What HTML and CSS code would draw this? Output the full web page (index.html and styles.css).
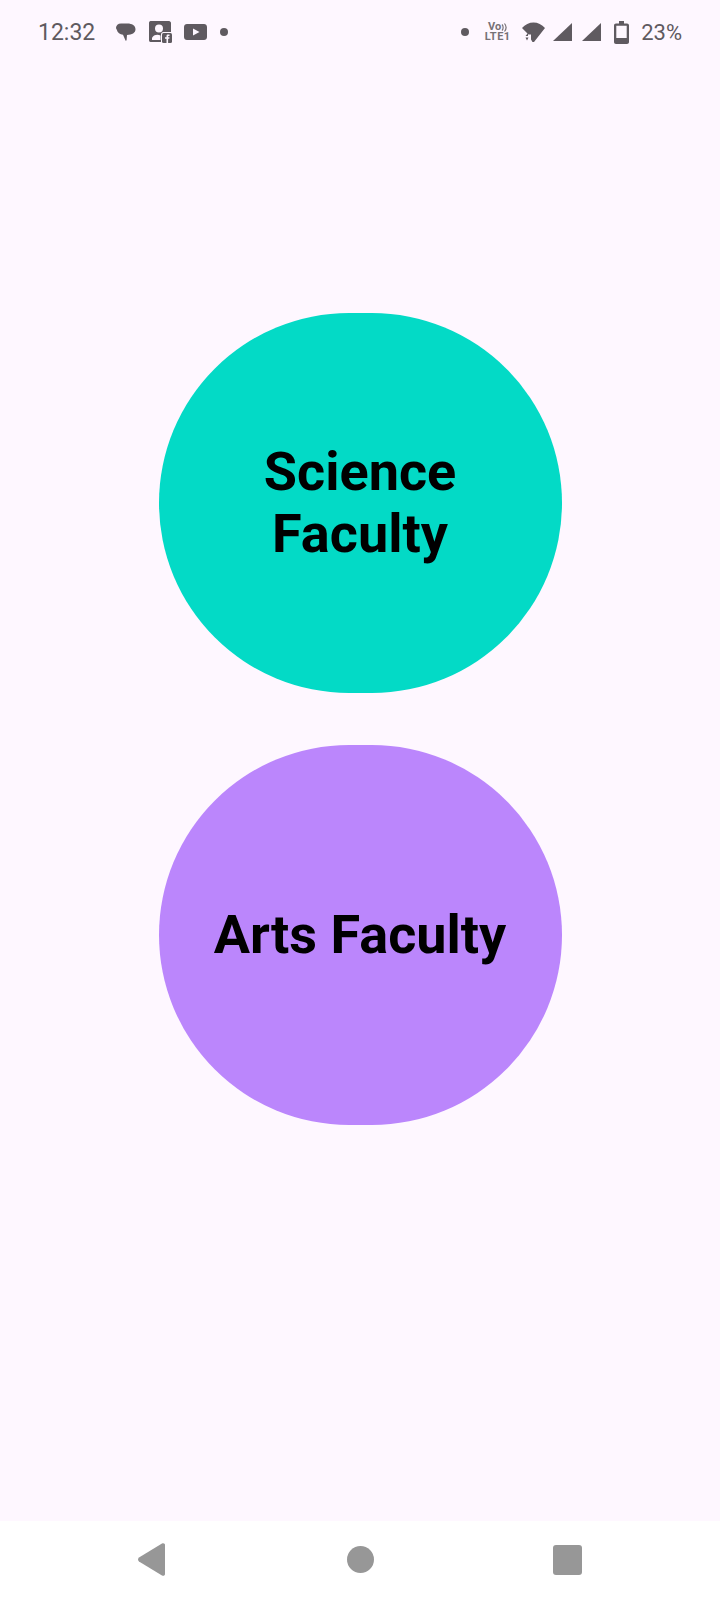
FILE: index.html
```html
<!DOCTYPE html>
<html lang="en">
<head>
  <meta charset="UTF-8" />
  <title>Faculties</title>
  <link rel="stylesheet" href="styles.css">
</head>
<body>
  <div class="phone">
    <div class="status-bar">
      <span class="clock">12:32</span>
      <svg class="ic ic-chat" viewBox="0 0 20 18"><path d="M5 0.5C2 0.5 0 2.5 0 4.8C0 5.6 .3 6.2 .8 6.8C1.4 9.6 4 11.5 7 11.7L9.5 17.5C10 17.9 10.5 17.6 10.6 17L11 11.9C16 11.8 19.5 9.8 19.5 6.2C19.5 2.6 16 .5 11.5 .5Z"/></svg>
      <svg class="ic ic-contact" viewBox="0 0 23 22"><path fill-rule="evenodd" d="M1.5 0H20C21 0 22 1 22 2V11H14.5C13 11 12 12 12 13.5V21H1.500C.5 21 0 20 0 19V2C0 1 .5 0 1.500 0ZM10 3.500A4 4 0 1 0 10 11.500A4 4 0 1 0 10 3.500ZM3 19H11.500V14.500C8.500 12.800 4 14 3 17Z"/><rect x="13" y="12" width="10" height="10" rx="1.500"/><path class="cutout" d="M17.500 22V17.800H16V16.200H17.500V15C17.500 13.900 18.300 13.400 20.500 13.600V15H19.600C19.200 15 19.100 15.200 19.100 15.500V16.200H20.500L20.300 17.800H19.100V22Z"/></svg>
      <svg class="ic ic-video" viewBox="0 0 23 16"><path fill-rule="evenodd" d="M3 0H20C21.700 0 23 1.300 23 3V13C23 14.700 21.700 16 20 16H3C1.300 16 0 14.700 0 13V3C0 1.300 1.300 0 3 0ZM9 4.500V11.500L15.500 8Z"/></svg>
      <span class="dot dot-left"></span>
      <span class="spacer"></span>
      <span class="dot dot-right"></span>
      <div class="volte">
        <span class="volte-top">Vo<svg class="volte-waves" viewBox="0 0 6 9"><path d="M1 1.500C2.500 3 2.500 6 1 7.500M3.500 .5C5.500 3 5.500 6 3.500 8.500" fill="none" stroke-width="1.200"/></svg></span>
        <span class="volte-bottom">LTE1</span>
      </div>
      <svg class="ic ic-wifi" viewBox="0 0 23 20"><path d="M0 6C6 -1.500 17 -1.500 23 6L12 20H10.500L9 17.500V12.500H6.500Z"/><path d="M3.500 14L6 11V14ZM3.500 15.500H6.500L5 18.500Z"/></svg>
      <svg class="ic ic-signal sig-one" viewBox="0 0 19 18"><path d="M19 0V18H0Z"/></svg>
      <svg class="ic ic-signal sig-two" viewBox="0 0 19 18"><path d="M19 0V18H0Z"/></svg>
      <svg class="ic ic-battery" viewBox="0 0 15 23"><path fill-rule="evenodd" d="M5 0H10V2.500H13C14.200 2.500 15 3.300 15 4.500V21C15 22.200 14.200 23 13 23H2C.8 23 0 22.200 0 21V4.500C0 3.300 .8 2.500 2 2.500H5ZM2.300 4.800V17H12.700V4.800Z"/></svg>
      <span class="battery-text">23%</span>
    </div>

    <main class="content">
      <button class="faculty science">Science<br>Faculty</button>
      <button class="faculty arts">Arts Faculty</button>
    </main>

    <nav class="nav-bar">
      <svg class="nav-ic nav-back" viewBox="0 0 27 33"><path d="M24 .5C25.500 -.3 27 .5 27 2V31C27 32.500 25.500 33.300 24 32.500L1 18.500C-.3 17.600 -.3 15.400 1 14.500Z"/></svg>
      <span class="nav-home"></span>
      <span class="nav-recent"></span>
    </nav>
  </div>
</body>
</html>
```

FILE: styles.css
```css
body {
  margin: 0;
  font-family: Roboto, sans-serif;
  background: #fef7ff;
}
.phone {
  width: 720px;
  height: 1600px;
  display: flex;
  flex-direction: column;
  overflow: hidden;
}

/* status bar */
.status-bar {
  height: 64px;
  padding: 0 38px 0 38px;
  display: flex;
  align-items: center;
  box-sizing: border-box;
  color: #5f5a60;
  fill: #5f5a60;
  stroke: none;
}
.clock {
  font-size: 23px;
  width: 78px;
}
.ic {
  display: block;
  flex: none;
}
.ic-chat {
  width: 20px;
  height: 18px;
}
.ic-contact {
  width: 23px;
  height: 22px;
  margin-left: 13px;
}
.cutout {
  fill: #fef7ff;
}
.ic-video {
  width: 23px;
  height: 16px;
  margin-left: 12px;
}
.dot {
  width: 8px;
  height: 8px;
  border-radius: 50%;
  background: #5f5a60;
  flex: none;
}
.dot-left {
  margin-left: 13px;
}
.spacer {
  flex: 1;
}
.volte {
  width: 27px;
  margin-left: 15px;
  display: flex;
  flex-direction: column;
  align-items: center;
  font-weight: 700;
  color: #767176;
}
.volte-top {
  font-size: 11px;
  line-height: 10px;
  display: flex;
  align-items: center;
}
.volte-waves {
  width: 6px;
  height: 9px;
  stroke: #767176;
}
.volte-bottom {
  font-size: 11px;
  line-height: 10px;
  letter-spacing: .5px;
}
.ic-wifi {
  width: 23px;
  height: 20px;
  margin-left: 11px;
}
.ic-signal {
  width: 19px;
  height: 18px;
}
.sig-one {
  margin-left: 8px;
}
.sig-two {
  margin-left: 10px;
}
.ic-battery {
  width: 15px;
  height: 23px;
  margin-left: 13px;
}
.battery-text {
  font-size: 22px;
  margin-left: 12px;
}

/* main buttons */
.content {
  flex: 1;
  display: flex;
  flex-direction: column;
  align-items: center;
  padding-top: 249px;
  gap: 52px;
}
.faculty {
  width: 403px;
  height: 380px;
  border: none;
  border-radius: 190px;
  padding: 0 24px 0 24px;
  font-family: Roboto, sans-serif;
  font-size: 54px;
  line-height: 62px;
  font-weight: 700;
  color: #000;
  text-align: center;
}
.science {
  background: #03dac6;
}
.arts {
  background: #bb86fc;
}

/* bottom nav */
.nav-bar {
  height: 79px;
  background: #fff;
  position: relative;
  flex: none;
}
.nav-ic,
.nav-home,
.nav-recent {
  position: absolute;
  display: block;
}
.nav-back {
  left: 138px;
  top: 22px;
  width: 27px;
  height: 33px;
  fill: #979797;
}
.nav-home {
  left: 347px;
  top: 25px;
  width: 27px;
  height: 27px;
  border-radius: 50%;
  background: #979797;
}
.nav-recent {
  left: 553px;
  top: 24px;
  width: 29px;
  height: 30px;
  border-radius: 3px;
  background: #979797;
}
```
